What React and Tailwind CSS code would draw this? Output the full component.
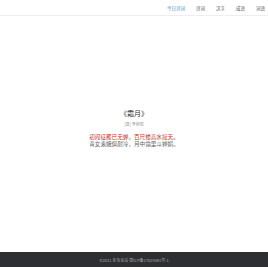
export default function App() {
  const font = { fontFamily: '"Noto Sans CJK SC", "Noto Sans", sans-serif' };
  return (
    <div className="flex h-[267px] w-[268px] flex-col bg-white" style={font}>
      <header className="flex h-[16px] items-center justify-end gap-[11px] border-b border-[#eeeeee] pt-[2px] pr-[3px] text-[4.5px] leading-none text-[#555]">
        <span className="text-[#4a90c8]">今日诗词</span>
        <span>诗词</span>
        <span>汉字</span>
        <span>成语</span>
        <span>词语</span>
      </header>
      <main className="flex flex-1 flex-col items-center pt-[93px]">
        <div className="h-[8px] text-[7px] leading-[8px] text-[#333]">《霜月》</div>
        <div className="mt-[5px] h-[5px] text-[4px] leading-[5px] text-[#999]">[唐] 李商隐</div>
        <div className="mt-[7px] h-[7px] text-[5.6px] leading-[7px] text-[#c0392b]">初闻征雁已无蝉，百尺楼高水接天。</div>
        <div className="h-[7px] text-[5.6px] leading-[7px] text-[#666]">青女素娥俱耐冷，月中霜里斗婵娟。</div>
      </main>
      <footer className="flex h-[15px] items-center justify-center bg-[#2d2f32] text-[4px] leading-none text-[#aaa]">
        ©2021 本专业站 鄂ICP备17035891号-1
      </footer>
    </div>
  );
}
